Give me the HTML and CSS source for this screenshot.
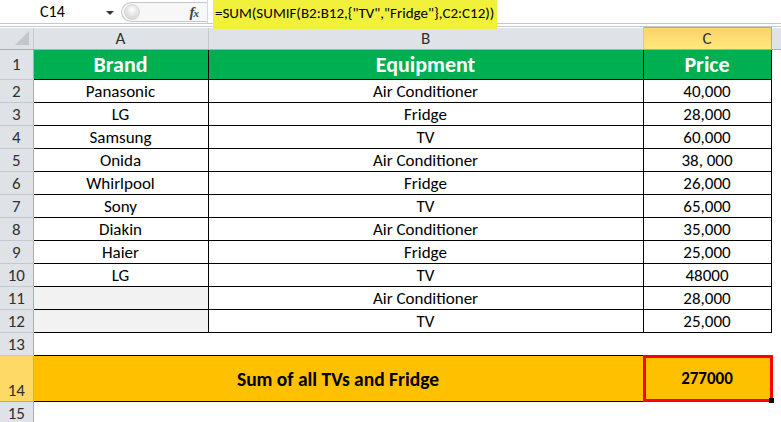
FILE: index.html
```html
<!DOCTYPE html>
<html>
<head>
<meta charset="utf-8">
<link rel="stylesheet" href="styles.css">
</head>
<body>
<div class="app">
  <div class="toolbar">
    <div class="namebox"><span class="name">C14</span><span class="arrow"></span></div>
    <div class="fxbox"><span class="knob"></span><span class="fx">f<span class="x">x</span></span></div>
    <div class="formula"><span class="hl">=SUM(SUMIF(B2:B12,{"TV","Fridge"},C2:C12))</span></div>
  </div>
  <div class="strip"></div>
  <table class="sheet">
    <colgroup>
      <col class="c-rh"><col class="c-a"><col class="c-b"><col class="c-c"><col class="c-rest">
    </colgroup>
    <tr class="colhead">
      <th class="corner"><span class="tri"></span></th>
      <th>A</th><th>B</th><th class="sel">C</th><th class="blank"></th>
    </tr>
    <tr class="r1">
      <th class="rh">1</th>
      <td class="g">Brand</td><td class="g">Equipment</td><td class="g">Price</td><td class="e"></td>
    </tr>
    <tr class="r"><th class="rh">2</th><td>Panasonic</td><td>Air Conditioner</td><td>40,000</td><td class="e"></td></tr>
    <tr class="r"><th class="rh">3</th><td>LG</td><td>Fridge</td><td>28,000</td><td class="e"></td></tr>
    <tr class="r"><th class="rh">4</th><td>Samsung</td><td>TV</td><td>60,000</td><td class="e"></td></tr>
    <tr class="r"><th class="rh">5</th><td>Onida</td><td>Air Conditioner</td><td>38, 000</td><td class="e"></td></tr>
    <tr class="r"><th class="rh">6</th><td>Whirlpool</td><td>Fridge</td><td>26,000</td><td class="e"></td></tr>
    <tr class="r"><th class="rh">7</th><td>Sony</td><td>TV</td><td>65,000</td><td class="e"></td></tr>
    <tr class="r"><th class="rh">8</th><td>Diakin</td><td>Air Conditioner</td><td>35,000</td><td class="e"></td></tr>
    <tr class="r"><th class="rh">9</th><td>Haier</td><td>Fridge</td><td>25,000</td><td class="e"></td></tr>
    <tr class="r"><th class="rh">10</th><td>LG</td><td>TV</td><td>48000</td><td class="e"></td></tr>
    <tr class="r"><th class="rh">11</th><td class="gray"></td><td>Air Conditioner</td><td>28,000</td><td class="e"></td></tr>
    <tr class="r"><th class="rh">12</th><td class="gray"></td><td>TV</td><td>25,000</td><td class="e"></td></tr>
    <tr class="r13"><th class="rh">13</th><td class="e"></td><td class="e"></td><td class="e"></td><td class="e"></td></tr>
    <tr class="r14">
      <th class="rh sel14">14</th>
      <td class="o sum" colspan="2">Sum of all TVs and Fridge</td>
      <td class="o total"><span class="val">277000</span><span class="redbox"></span><span class="handle"></span></td>
      <td class="e"></td>
    </tr>
    <tr class="r15"><th class="rh">15</th><td class="e"></td><td class="e"></td><td class="e"></td><td class="e"></td></tr>
  </table>
</div>
</body>
</html>
```
FILE: styles.css
```css
html, body {
  margin: 0;
  padding: 0;
  background: #ffffff;
}
.app {
  width: 781px;
  height: 422px;
  overflow: hidden;
  font-family: "Carlito", "Calibri", "Lato", "Liberation Sans", sans-serif;
}
.toolbar {
  height: 23px;
  display: flex;
  align-items: flex-start;
  border-bottom: 1px solid #c4c7cc;
  background: #ffffff;
}
.namebox {
  width: 121px;
  height: 23px;
  display: flex;
  align-items: center;
  position: relative;
}
.name {
  font-size: 16px;
  color: #000;
  margin-left: 40px;
  font-family: "Carlito", "Lato", "Liberation Sans", sans-serif;
}
.arrow {
  margin-left: 41px;
  width: 0;
  height: 0;
  border-left: 4px solid transparent;
  border-right: 4px solid transparent;
  border-top: 4px solid #333;
  margin-top: 2px;
}
.fxbox {
  width: 86px;
  height: 20px;
  margin-top: 2px;
  box-sizing: border-box;
  border: 1px solid #c3c6cb;
  border-right: none;
  border-radius: 11px 0 0 11px;
  display: flex;
  align-items: center;
  justify-content: space-between;
  background: #f7f7f7;
}
.knob {
  width: 14px;
  height: 14px;
  margin-left: 2px;
  border-radius: 50%;
  border: 1px solid #d4d6d9;
  background: radial-gradient(circle at 50% 35%, #ffffff 0%, #e6e6e6 45%, #cfcfcf 100%);
}
.fx {
  font-family: "Liberation Serif", "DejaVu Serif", serif;
  font-style: italic;
  font-weight: bold;
  font-size: 15px;
  color: #444;
  margin-right: 9px;
  letter-spacing: -1px;
}
.fx .x {
  font-size: 11px;
}
.formula {
  flex: 1;
  height: 23px;
  border-left: 1px solid #d5d8dc;
  padding-left: 5px;
  position: relative;
  z-index: 2;
}
.hl {
  display: inline-block;
  height: 29px;
  line-height: 26px;
  padding: 0 3px 0 2px;
  background: #f1f13c;
  font-size: 15px;
  color: #000;
  white-space: nowrap;
  border-radius: 1px;
}
.strip {
  height: 2px;
  border-bottom: 1px solid #c4c7cc;
  background: #fff;
}
.sheet {
  border-collapse: collapse;
  table-layout: fixed;
  width: 781px;
}
.c-rh { width: 33px; }
.c-a { width: 175px; }
.c-b { width: 435px; }
.c-c { width: 128px; }
.c-rest { width: 10px; }
.sheet th, .sheet td {
  padding: 0;
  margin: 0;
  overflow: visible;
  white-space: nowrap;
}
.colhead th {
  height: 21px;
  background: #dfe3e8;
  color: #303030;
  font-weight: normal;
  font-size: 17px;
  border-right: 1px solid #c5c9ce;
  border-bottom: 1px solid #a9adb3;
  text-align: center;
  vertical-align: middle;
}
.colhead th.sel {
  background: linear-gradient(#f9d36a, #ffe97d);
  border: 1px solid #d9a440;
  color: #303030;
}
.colhead th.blank {
  border-right: none;
}
.corner {
  position: relative;
}
.tri {
  position: absolute;
  right: 4px;
  bottom: 4px;
  width: 0;
  height: 0;
  border-left: 14px solid transparent;
  border-bottom: 14px solid #c3c7cc;
}
.rh {
  background: #dfe3e8;
  color: #303030;
  font-weight: normal;
  font-size: 17px;
  text-align: center;
  vertical-align: middle;
  border-bottom: 1px solid #c5c9ce;
  border-right: 1px solid #a9adb3;
}
.r1 th, .r1 td { height: 29px; }
.r th, .r td { height: 22px; }
.r13 th, .r13 td { height: 22px; }
.r14 th, .r14 td { height: 45px; }
.r15 th, .r15 td { height: 22px; }
.sheet td {
  font-size: 17px;
  color: #000;
  text-align: center;
  vertical-align: middle;
  border: 1px solid #000;
}
.sheet td.e {
  border: none;
  background: #fff;
}
.r1 td.e, .r td.e {
  border-left: 1px solid #000;
}
.sheet td.g {
  background: #00b050;
  color: #fff;
  font-weight: bold;
  font-size: 22px;
}
.sheet td.gray {
  background: #f2f2f2;
}
.sheet td.o {
  background: #ffc000;
  font-weight: bold;
  font-size: 17px;
}
.sheet td.sum {
  font-size: 19.5px;
}
.r14 td.e {
  border-left: 1px solid #000;
}
.rh.sel14 {
  background: #ffd965;
  vertical-align: bottom;
  border-bottom: 1px solid #d9a440;
  border-top: 1px solid #d9a440;
}
.total {
  position: relative;
}
.redbox {
  position: absolute;
  left: -1px;
  top: -1px;
  right: -2px;
  bottom: -1px;
  border: 3px solid #ff0000;
}
.handle {
  position: absolute;
  right: -4px;
  bottom: -3px;
  width: 5px;
  height: 5px;
  background: #000;
  border: 1px solid #fff;
  border-top: none;
  border-left: none;
}
```
